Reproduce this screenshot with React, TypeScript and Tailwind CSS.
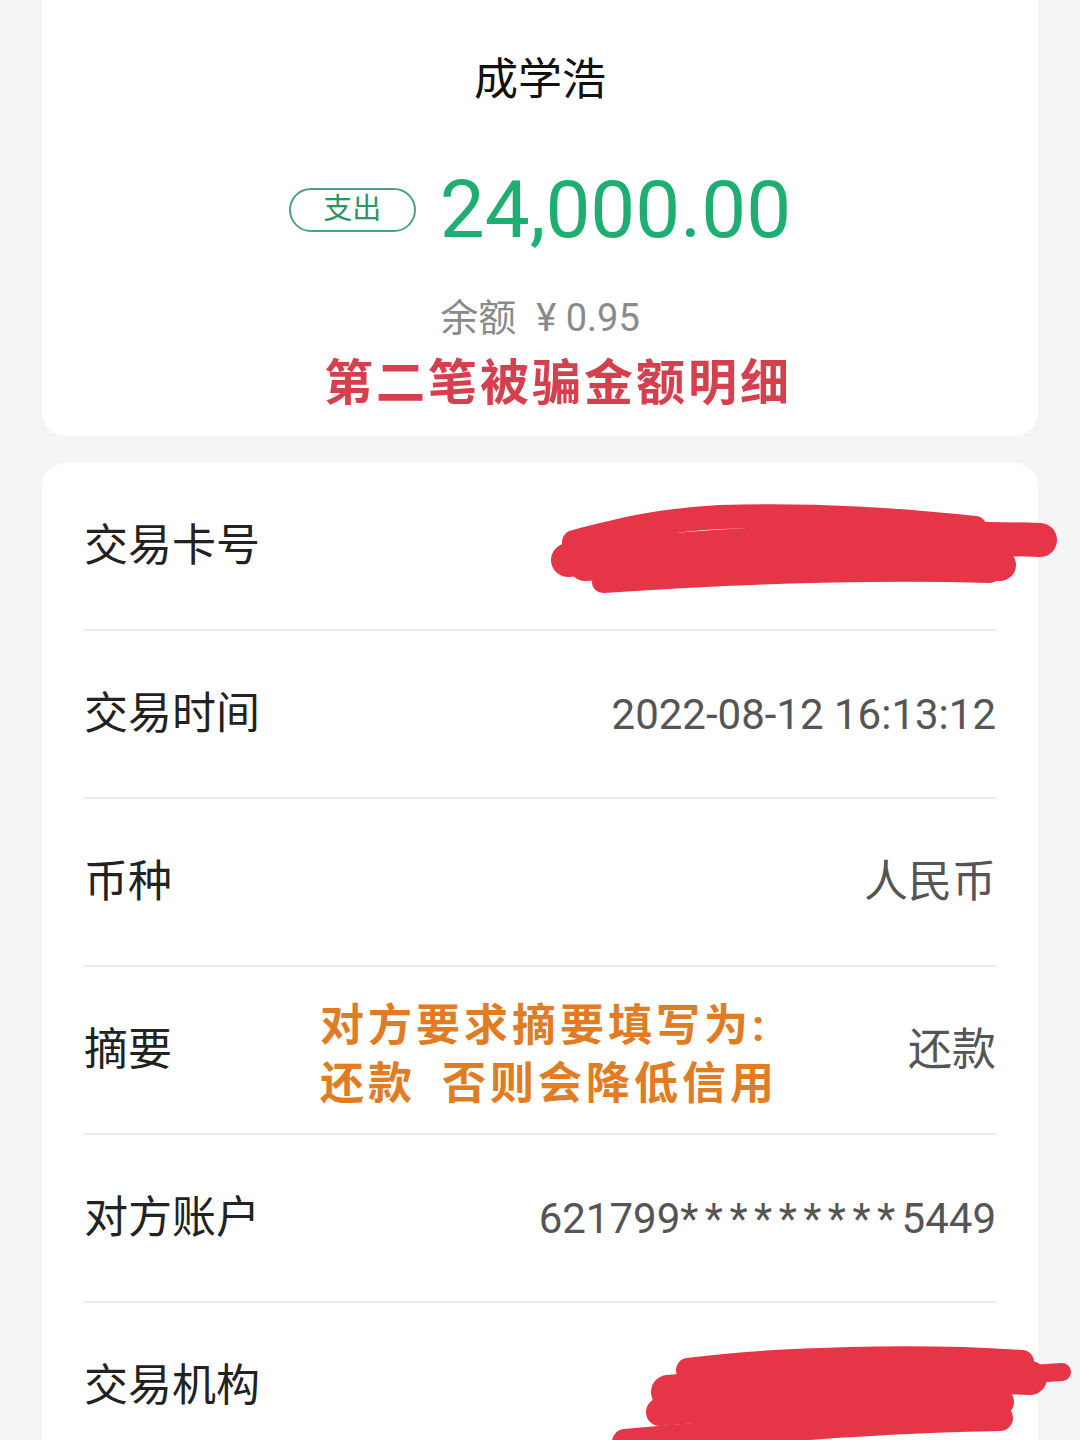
const font = "font-['Roboto','Noto_Sans_CJK_SC',sans-serif]";

type Row = { label: string; value?: React.ReactNode; cjk?: boolean };

const rows: Row[] = [
  { label: '交易卡号' },
  { label: '交易时间', value: '2022-08-12 16:13:12' },
  { label: '币种', value: '人民币', cjk: true },
  { label: '摘要', value: '还款', cjk: true },
  {
    label: '对方账户',
    value: (
      <>
        621799<span className="tracking-[6.5px]">*********</span>5449
      </>
    ),
  },
  { label: '交易机构' },
];

function Scribbles() {
  return (
    <svg
      className="pointer-events-none absolute inset-0"
      width="1080"
      height="1440"
      viewBox="0 0 1080 1440"
    >
      <g stroke="#e63546" strokeLinecap="round" strokeLinejoin="round" fill="none">
        {/* card number */}
        <path d="M574 542 C 620 530, 660 520, 720 517 C 820 514, 900 520, 975 528" strokeWidth="24" />
        <path d="M568 560 C 700 545, 880 535, 1040 540" strokeWidth="34" />
        <path d="M985 532 L 1045 540" strokeWidth="20" />
        <path d="M585 565 C 720 557, 880 554, 1000 565" strokeWidth="32" />
        <path d="M603 582 C 720 574, 860 568, 990 572" strokeWidth="22" />
        {/* institution */}
        <path d="M688 1370 C 780 1358, 920 1355, 1022 1362" strokeWidth="24" />
        <path d="M668 1392 C 800 1380, 940 1374, 1030 1378" strokeWidth="34" />
        <path d="M1000 1376 L 1062 1372" strokeWidth="18" />
        <path d="M660 1412 C 780 1402, 900 1398, 1000 1402" strokeWidth="28" />
        <path d="M625 1442 C 760 1430, 880 1420, 1000 1418" strokeWidth="26" />
      </g>
    </svg>
  );
}

export default function App() {
  return (
    <div className={`relative h-[1440px] w-[1080px] overflow-hidden bg-[#f5f5f5] ${font}`}>
      <section className="mx-[42px] flex h-[436px] flex-col items-center rounded-b-[24px] bg-white">
        <div className="mt-[58px] text-[44px] leading-[44px] text-[#111]">成学浩</div>
        <div className="mt-[68px] flex items-center gap-[24px]">
          <span className="flex h-[44px] w-[127px] items-center justify-center rounded-full border-2 border-[#4aa281] text-[29px] text-[#2e9467]">
            支出
          </span>
          <span className="text-[80px] leading-[80px] text-[#1fae72]">24,000.00</span>
        </div>
        <div className="mt-[49px] text-[38px] leading-[38px] text-[#8a8a8a]">
          余额<span className="ml-[20px]">¥ 0.95</span>
        </div>
        <div className="ml-[36px] mt-[22px] text-[49px] font-bold leading-[50px] tracking-[3px] text-[#d5404f]">
          第二笔被骗金额明细
        </div>
      </section>

      <section className="mx-[42px] mt-[27px] rounded-t-[24px] bg-white px-[42px]">
        {rows.map((row) => (
          <div
            key={row.label}
            className="relative flex h-[168px] items-center justify-between border-b-2 border-[#ececec]"
          >
            <span className="text-[44px] text-[#222]">{row.label}</span>
            {row.value && (
              <span className={`${row.cjk ? 'text-[44px]' : 'text-[42px]'} text-[#555]`}>
                {row.value}
              </span>
            )}
            {row.label === '摘要' && (
              <div className="absolute left-[236px] top-[30px] text-[44px] font-bold leading-[58px] tracking-[4px] text-[#e07c24]">
                <div>对方要求摘要填写为:</div>
                <div>
                  还款<span className="ml-[26px]">否则会降低信用</span>
                </div>
              </div>
            )}
          </div>
        ))}
      </section>

      <Scribbles />
    </div>
  );
}
